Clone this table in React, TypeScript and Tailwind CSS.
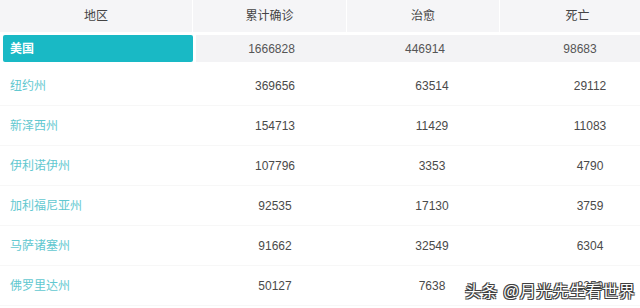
const rows = [
  { name: '纽约州', total: '369656', cured: '63514', dead: '29112' },
  { name: '新泽西州', total: '154713', cured: '11429', dead: '11083' },
  { name: '伊利诺伊州', total: '107796', cured: '3353', dead: '4790' },
  { name: '加利福尼亚州', total: '92535', cured: '17130', dead: '3759' },
  { name: '马萨诸塞州', total: '91662', cured: '32549', dead: '6304' },
  { name: '佛罗里达州', total: '50127', cured: '7638', dead: '2259' },
];

const font = "font-['Liberation_Sans','Noto_Sans_CJK_SC',sans-serif]";

export default function App() {
  return (
    <div className={`relative w-[640px] h-[308px] overflow-hidden bg-white ${font}`}>
      {/* header */}
      <div className="grid grid-cols-[193px_154px_153px_155px] h-[32px] text-[12px] text-[#444]">
        <div className="flex items-center justify-center bg-[#f5f5f7] border-r border-white">地区</div>
        <div className="flex items-center justify-center bg-[#f5f5f7] border-r border-white">累计确诊</div>
        <div className="flex items-center justify-center bg-[#f5f5f7] border-r border-white">治愈</div>
        <div className="flex items-center justify-center bg-[#f5f5f7]">死亡</div>
      </div>

      {/* country row */}
      <div className="grid grid-cols-[193px_154px_153px_155px] h-[27px] mt-[3px] text-[12px] text-[#555]">
        <div className="flex items-center pl-[7px] ml-[3px] bg-[#19b9c5] rounded-[2px] text-white font-bold">美国</div>
        <div className="flex items-center justify-center bg-[#f3f3f5] ml-[3px]">1666828</div>
        <div className="flex items-center justify-center bg-[#f3f3f5] pl-[3px]">446914</div>
        <div className="flex items-center justify-center bg-[#f3f3f5] pl-[5px]">98683</div>
      </div>

      {/* states */}
      <div className="mt-[4px]">
        {rows.map((r) => (
          <div
            key={r.name}
            className="grid grid-cols-[193px_154px_153px_155px] h-[40px] text-[12px] text-[#4a4a4a] border-b border-[#f7f7f7]"
          >
            <div className="flex items-center pl-[10px] text-[#62c8d0]">{r.name}</div>
            <div className="flex items-center justify-center pl-[10px]">{r.total}</div>
            <div className="flex items-center justify-center pl-[17px]">{r.cured}</div>
            <div className="flex items-center justify-center pl-[25px]">{r.dead}</div>
          </div>
        ))}
      </div>

      {/* watermark */}
      <div className="absolute left-[465px] top-[280px] text-[16px] text-white tracking-[0.5px] [text-shadow:0_0_1px_#222,1px_1px_0_#444,-1px_-1px_0_#444,1px_-1px_0_#444,-1px_1px_0_#444]">
        头条 @月光先生看世界
      </div>
    </div>
  );
}
